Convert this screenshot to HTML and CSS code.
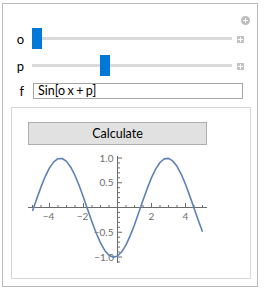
FILE: index.html
```html
<html>

<head>
    <link rel="stylesheet" href="styles.css">
    <title>Manipulate</title>
</head>

<body>
    <div class="frame">
        <div class="topbar">
            <span class="addcircle"></span>
        </div>

        <div class="row">
            <span class="label">o</span>
            <div class="slider">
                <div class="thumb" style="margin-left: 0px"></div>
            </div>
            <span class="plus"></span>
        </div>

        <div class="row gap-p">
            <span class="label">p</span>
            <div class="slider">
                <div class="thumb" style="margin-left: 68px"></div>
            </div>
            <span class="plus"></span>
        </div>

        <div class="row gap-f">
            <span class="label">f</span>
            <div class="field">Sin[o x + p]</div>
        </div>

        <div class="panel">
            <div class="button">Calculate</div>

            <svg class="plot" width="238" height="125" viewBox="12 145 238 125">
                <!-- axes -->
                <g stroke="#6b6b6b" stroke-width="1" fill="none">
                    <path d="M28 206.5H207" />
                    <path d="M117.5 155V262" />
                    <!-- x ticks -->
                    <path d="M49.5 206v-4M83.5 206v-4M151.5 206v-4M185.5 206v-4" />
                    <path d="M32.5 206v-2M41 206v-2M58 206v-2M66.5 206v-2M75 206v-2M92 206v-2M100.5 206v-2M109 206v-2M126 206v-2M134.5 206v-2M143 206v-2M160 206v-2M168.5 206v-2M177 206v-2M194 206v-2M202.5 206v-2" />
                    <!-- y ticks -->
                    <path d="M118 157h4M118 181.75h4M118 231.25h4M118 256h4" />
                    <path d="M118 161.95h2M118 166.9h2M118 171.85h2M118 176.8h2M118 186.7h2M118 191.65h2M118 196.6h2M118 201.55h2M118 211.45h2M118 216.4h2M118 221.35h2M118 226.3h2M118 236.2h2M118 241.15h2M118 246.1h2M118 251.05h2M118 260.95h2" />
                </g>

                <g class="ticklabel" text-anchor="end">
                    <text x="113.5" y="160.5">1.0</text>
                    <text x="113.5" y="185.2">0.5</text>
                    <text x="113.5" y="234.7">−0.5</text>
                    <text x="114" y="259.5">−1.0</text>
                </g>
                <g class="ticklabel" text-anchor="middle">
                    <text x="48.5" y="219">−4</text>
                    <text x="82.5" y="219">−2</text>
                    <text x="151.5" y="219">2</text>
                    <text x="185.5" y="219">4</text>
                </g>

                <!-- Sin[x - 1.35], x from -5 to 5 -->
                <polyline fill="none" stroke="#5e81b5" stroke-width="1.6" stroke-linejoin="round"
                    points="32.5,210 36.75,197.7 41,185.9 45.25,175.45 49.5,166.9 53.75,160.9 58,157.7 62.25,157.5 66.5,160.4 70.75,166.2 75,174.5 79.25,184.8 83.5,196.5 87.75,208.8 92,220.9 96.25,232.2 100.5,241.9 104.75,249.4 109,254.3 113.25,256.2 117.5,255 121.75,250.8 126,243.9 130.25,234.65 134.5,223.7 138.75,211.6 143,199.3 147.25,187.4 151.5,176.7 155.75,167.9 160,161.5 164.25,157.9 168.5,157.35 172.75,159.9 177,165.3 181.25,173.3 185.5,183.3 189.75,194.9 194,207.1 198.25,219.35 202.5,230.8" />
            </svg>
        </div>
    </div>
</body>

</html>
```

FILE: styles.css
```css
body {
    margin: 0;
    background: #fff;
    font-family: "Segoe UI", Lato, "Noto Sans", sans-serif;
    color: #000;
}

.frame {
    box-sizing: border-box;
    width: 256px;
    height: 284px;
    margin: 3px 0 0 2px;
    border: 1px solid #b9b9b9;
}

.topbar {
    display: flex;
    justify-content: flex-end;
    height: 9px;
    margin-top: 12px;
    padding-right: 7px;
}

.addcircle {
    position: relative;
    width: 9px;
    height: 9px;
    border-radius: 50%;
    background: #bcbcbc;
}

.addcircle::before,
.addcircle::after {
    content: "";
    position: absolute;
    background: #fff;
}

.addcircle::before {
    left: 2px;
    top: 4px;
    width: 5px;
    height: 1px;
}

.addcircle::after {
    left: 4px;
    top: 2px;
    width: 1px;
    height: 5px;
}

.row {
    display: flex;
    align-items: center;
    height: 21px;
    margin-top: 3px;
}

.gap-p {
    margin-top: 6px;
}

.gap-f {
    height: 16px;
    margin-top: 7px;
}

.label {
    width: 21px;
    margin-right: 8px;
    text-align: right;
    font-size: 13px;
}

.slider {
    display: flex;
    align-items: center;
    width: 200px;
    height: 21px;
    background: linear-gradient(#dadada, #dadada) center / 100% 3px no-repeat;
}

.thumb {
    width: 10px;
    height: 21px;
    background: #0078d7;
}

.plus {
    position: relative;
    width: 7px;
    height: 7px;
    margin: 2px 0 0 5px;
    background: #c3c3c3;
}

.plus::before,
.plus::after {
    content: "";
    position: absolute;
    background: #fff;
}

.plus::before {
    left: 1px;
    top: 3px;
    width: 5px;
    height: 1px;
}

.plus::after {
    left: 3px;
    top: 1px;
    width: 1px;
    height: 5px;
}

.field {
    box-sizing: border-box;
    width: 210px;
    height: 16px;
    margin-left: 1px;
    padding-left: 4px;
    border: 1px solid #a5a5a5;
    font-size: 12.5px;
    line-height: 14px;
    word-spacing: -0.8px;
}

.panel {
    box-sizing: border-box;
    width: 240px;
    height: 172px;
    margin: 8px 0 0 8px;
    padding: 14px 0 0 0;
    border: 1px solid #d6d6d6;
}

.button {
    box-sizing: border-box;
    width: 179px;
    height: 23px;
    margin-left: 16px;
    border: 1px solid #adadad;
    background: #e1e1e1;
    text-align: center;
    font-size: 12.5px;
    line-height: 21px;
}

.plot {
    display: block;
    margin-top: 1px;
}

.ticklabel {
    font-size: 10px;
    fill: #6e6e6e;
}
```
